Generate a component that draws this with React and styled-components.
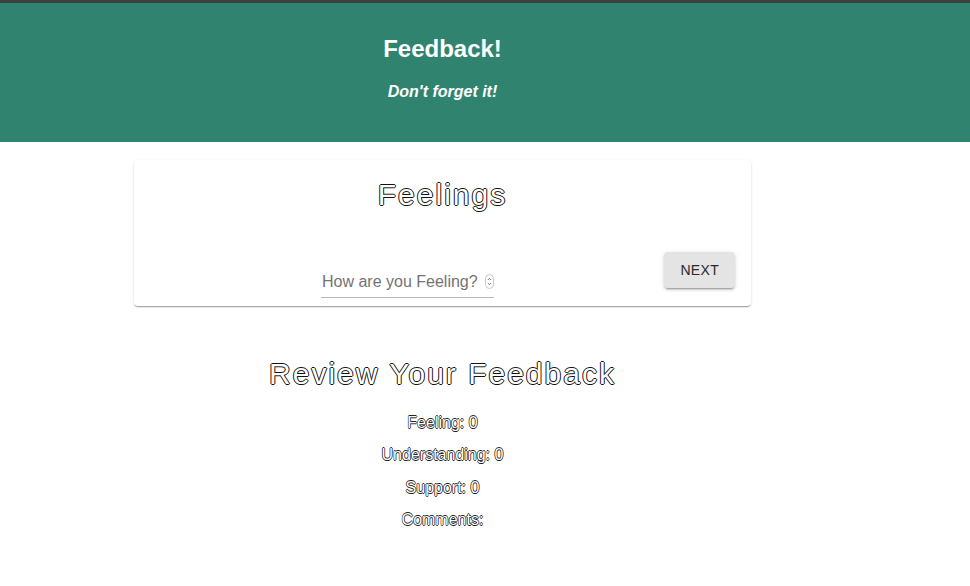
import React from 'react';
import styled, { createGlobalStyle } from 'styled-components';

const GlobalStyle = createGlobalStyle`
  html, body {
    margin: 0;
    padding: 0;
    background: #fff;
    font-family: "Liberation Sans", Arial, sans-serif;
  }
`;

// white lettering with a thin dark outline, as in the original page
const outline = `
  color: #fff;
  text-shadow: -1px 0 0 #111, 1px 0 0 #111, 0 -1px 0 #111, 0 1px 0 #111;
`;

const Header = styled.header`
  background: #30846f;
  border-top: 3px solid #3b3f3e;
  height: 139px;
  box-sizing: content-box;
`;

const HeaderInner = styled.div`
  width: 885px;
  padding-top: 32px;
  text-align: center;
  color: #fff;
`;

const Title = styled.h1`
  margin: 0;
  font-size: 24px;
  line-height: 28px;
  font-weight: bold;
`;

const Tagline = styled.h4`
  margin: 19px 0 0;
  font-size: 16px;
  line-height: 19px;
  font-weight: bold;
  font-style: italic;
`;

const Main = styled.main`
  width: 885px;
  display: flex;
  flex-direction: column;
  align-items: center;
  padding-top: 18px;
`;

const Card = styled.section`
  width: 617px;
  box-sizing: border-box;
  padding: 17px 16px 8px;
  background: #fff;
  border-radius: 4px;
  box-shadow: 0px 2px 1px -1px rgba(0, 0, 0, 0.2), 0px 1px 1px 0px rgba(0, 0, 0, 0.14),
    0px 1px 3px 0px rgba(0, 0, 0, 0.12);
`;

const Heading = styled.h2`
  margin: 0;
  font-size: 30px;
  line-height: 35px;
  font-weight: normal;
  letter-spacing: 2px;
  text-align: center;
  ${outline}
`;

const FormRow = styled.div`
  display: flex;
  align-items: flex-start;
  margin-top: 40px;
`;

const Field = styled.label`
  display: flex;
  align-items: center;
  margin: 16px 0 0 171px;
  width: 173px;
  padding: 4px 0 6px;
  border-bottom: 1px solid #b8b8b8;
`;

const NumberInput = styled.input`
  flex: 1;
  min-width: 0;
  border: none;
  outline: none;
  padding: 0 0 0 1px;
  font: 16px/19px "Liberation Sans", Arial, sans-serif;
  color: #333;
  background: transparent;
  &::placeholder {
    color: #737373;
    opacity: 1;
  }
  &::-webkit-inner-spin-button {
    display: none;
  }
`;

const NextButton = styled.button`
  margin-left: auto;
  height: 36px;
  min-width: 70px;
  padding: 0 16px;
  border: none;
  border-radius: 4px;
  background: #e4e4e4;
  color: #2a2a2a;
  font: 14px "Liberation Sans", Arial, sans-serif;
  text-transform: uppercase;
  letter-spacing: 0.3px;
  box-shadow: 0px 3px 1px -2px rgba(0, 0, 0, 0.2), 0px 2px 2px 0px rgba(0, 0, 0, 0.14),
    0px 1px 5px 0px rgba(0, 0, 0, 0.12);
  cursor: pointer;
`;

const Review = styled.section`
  margin-top: 50px;
  display: flex;
  flex-direction: column;
  align-items: center;
`;

const ReviewList = styled.div`
  margin-top: 16px;
  text-align: center;
`;

const ReviewLine = styled.p`
  margin: 0;
  font-size: 16px;
  line-height: 32.4px;
  color: #fff;
  text-shadow: -0.7px 0 0 #222, 0.7px 0 0 #222, 0 -0.7px 0 #222, 0 0.7px 0 #222;
`;

function Spinner() {
  return (
    <svg width="9" height="15" viewBox="0 0 9 15" fill="none">
      <rect x="0.5" y="0.5" width="8" height="14" rx="4" stroke="#c8c8c8" />
      <path d="M2.8 6 L4.5 4.3 L6.2 6" stroke="#777" strokeWidth="1" />
      <path d="M2.8 9 L4.5 10.7 L6.2 9" stroke="#777" strokeWidth="1" />
    </svg>
  );
}

const feedback = { feeling: 0, understanding: 0, support: 0, comments: '' };

export default function App() {
  return (
    <>
      <GlobalStyle />
      <Header>
        <HeaderInner>
          <Title>Feedback!</Title>
          <Tagline>Don't forget it!</Tagline>
        </HeaderInner>
      </Header>
      <Main>
        <Card>
          <Heading>Feelings</Heading>
          <FormRow>
            <Field>
              <NumberInput type="number" placeholder="How are you Feeling?" />
              <Spinner />
            </Field>
            <NextButton>Next</NextButton>
          </FormRow>
        </Card>
        <Review>
          <Heading>Review Your Feedback</Heading>
          <ReviewList>
            <ReviewLine>Feeling: {feedback.feeling}</ReviewLine>
            <ReviewLine>Understanding: {feedback.understanding}</ReviewLine>
            <ReviewLine>Support: {feedback.support}</ReviewLine>
            <ReviewLine>Comments: {feedback.comments}</ReviewLine>
          </ReviewList>
        </Review>
      </Main>
    </>
  );
}
